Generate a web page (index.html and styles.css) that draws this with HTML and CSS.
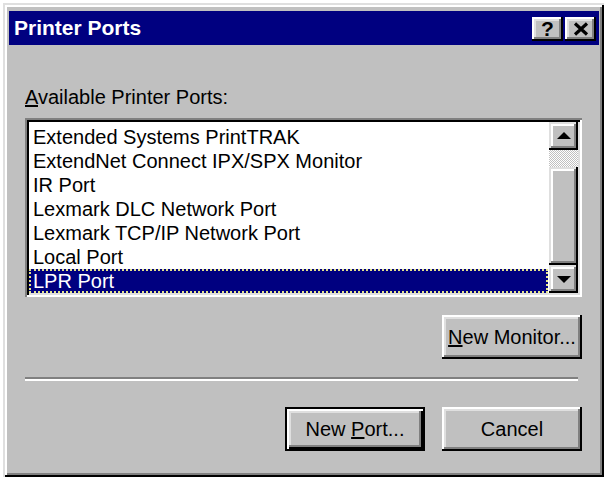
FILE: index.html
```
<!DOCTYPE html>
<html>
<head>
  <meta name="viewport" content="width=device-width, initial-scale=1.0">
  <title>Printer Ports</title>
  <link rel="stylesheet" href="styles.css">
</head>
<body>
  <div class="window">
    <div class="titlebar">
      <span class="title">Printer Ports</span>
      <div class="tb-btn help">?</div>
      <div class="tb-btn close">
        <svg width="16" height="14" viewBox="0 0 16 14">
          <path d="M2 1.5 L14 12.5 M14 1.5 L2 12.5" stroke="#000" stroke-width="3.2" fill="none"/>
        </svg>
      </div>
    </div>
    <div class="content">
      <div class="label"><u>A</u>vailable Printer Ports:</div>
      <div class="listbox">
        <ul class="items">
          <li>Extended Systems PrintTRAK</li>
          <li>ExtendNet Connect IPX/SPX Monitor</li>
          <li>IR Port</li>
          <li>Lexmark DLC Network Port</li>
          <li>Lexmark TCP/IP Network Port</li>
          <li>Local Port</li>
          <li class="sel">LPR Port</li>
        </ul>
        <div class="scrollbar">
          <div class="sb-btn"><span class="arrow-up"></span></div>
          <div class="sb-track"></div>
          <div class="sb-thumb"></div>
          <div class="sb-btn"><span class="arrow-down"></span></div>
        </div>
      </div>
      <div class="button-row">
        <button class="btn"><span><u>N</u>ew Monitor...</span></button>
      </div>
      <div class="sep"></div>
      <div class="button-row bottom">
        <button class="btn default"><span>New <u>P</u>ort...</span></button>
        <button class="btn">Cancel</button>
      </div>
    </div>
  </div>
</body>
</html>
```
FILE: styles.css
```
body {
  margin: 0;
  background: #fff;
  overflow: hidden;
}
.window {
  margin: 3px;
  width: 601px;
  height: 474px;
  box-sizing: border-box;
  background: #c0c0c0;
  box-shadow: inset 2px 2px #dfdfdf, inset -2px -2px #000, inset 4px 4px #fff, inset -4px -4px #808080;
  padding: 8px 5px 4px 6px;
  font-family: "Liberation Sans", Arial, sans-serif;
  font-size: 20px;
  color: #000;
}
.titlebar {
  height: 34px;
  background: #000080;
  color: #fff;
  display: flex;
  align-items: center;
  padding: 0 3px 0 5px;
}
.title {
  flex: 1;
  font-weight: bold;
  font-size: 21px;
  line-height: 34px;
}
.tb-btn {
  width: 31px;
  height: 24px;
  margin-top: 2px;
  box-sizing: border-box;
  background: #c0c0c0;
  color: #000;
  box-shadow: inset -2px -2px #000, inset 2px 2px #fff, inset -4px -4px #808080, inset 4px 4px #dfdfdf;
  display: flex;
  align-items: center;
  justify-content: center;
}
.help {
  font-weight: bold;
  font-size: 21px;
  margin-right: 2px;
  padding-bottom: 1px;
}
.close svg {
  display: block;
  margin-top: -1px;
}
.content {
  padding: 0 17px 0 16px;
  display: flex;
  flex-direction: column;
}
.label {
  margin-top: 40px;
  line-height: 24px;
}
.listbox {
  margin-top: 9px;
  height: 179px;
  box-sizing: border-box;
  padding: 4px;
  background: #fff;
  box-shadow: inset 2px 2px #808080, inset -2px -2px #fff, inset 4px 4px #000, inset -4px -4px #dfdfdf;
  display: flex;
}
.items {
  flex: 1;
  list-style: none;
  margin: 0;
  padding: 3px 0 0 0;
}
.items li {
  height: 24px;
  line-height: 25px;
  padding-left: 4px;
  white-space: nowrap;
  box-sizing: border-box;
}
.items li.sel {
  background: #000080;
  color: #fff;
  outline: 2px dotted #e4e48c;
  outline-offset: -2px;
  margin-right: 1px;
}
.scrollbar {
  width: 29px;
  display: flex;
  flex-direction: column;
}
.sb-btn,
.sb-thumb {
  background: #c0c0c0;
  box-shadow: inset -2px -2px #000, inset 2px 2px #dfdfdf, inset -4px -4px #808080, inset 4px 4px #fff;
}
.sb-btn {
  height: 28px;
  display: flex;
  align-items: center;
  justify-content: center;
}
.sb-track {
  height: 17px;
  background: repeating-conic-gradient(#c0c0c0 0 25%, #fff 0 50%) 0 0 / 2px 2px;
}
.sb-thumb {
  flex: 1;
}
.arrow-up,
.arrow-down {
  width: 0;
  height: 0;
  border-left: 7px solid transparent;
  border-right: 7px solid transparent;
}
.arrow-up {
  border-bottom: 7px solid #000;
  margin-top: -2px;
}
.arrow-down {
  border-top: 7px solid #000;
}
.button-row {
  display: flex;
  justify-content: flex-end;
  gap: 17px;
  margin-top: 18px;
}
.button-row.bottom {
  margin-top: 26px;
}
.btn {
  width: 140px;
  height: 44px;
  box-sizing: border-box;
  border: 0;
  padding: 0;
  background: #c0c0c0;
  font: inherit;
  color: #000;
  box-shadow: inset -2px -2px #000, inset 2px 2px #fff, inset -4px -4px #808080, inset 4px 4px #dfdfdf;
  display: flex;
  align-items: center;
  justify-content: center;
}
.btn.default {
  box-shadow: inset 0 0 0 2px #000, inset 4px 4px #fff, inset -4px -4px #000, inset -6px -6px #808080, inset 6px 6px #dfdfdf;
}
.sep {
  margin-top: 18px;
  margin-right: 4px;
  height: 0;
  border-top: 2px solid #808080;
  border-bottom: 2px solid #fff;
}
```
